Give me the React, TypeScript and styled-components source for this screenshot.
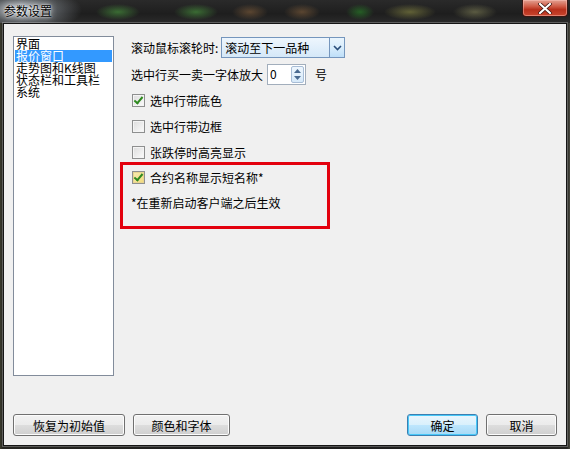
import React, { useState } from 'react';
import styled, { createGlobalStyle, css } from 'styled-components';

const GlobalStyle = createGlobalStyle`
  html, body {
    margin: 0;
    padding: 0;
    background: #1b1b1b;
    overflow: hidden;
  }
  *, *::before, *::after {
    box-sizing: border-box;
  }
`;

const FONT = `"Noto Sans CJK SC", "Liberation Sans", sans-serif`;

const categories = ['界面', '报价窗口', '走势图和K线图', '状态栏和工具栏', '系统'];

const checkOptions = [
  { key: 'rowBg', label: '选中行带底色' },
  { key: 'rowBorder', label: '选中行带边框' },
  { key: 'highlight', label: '张跌停时高亮显示' },
];

const App = () => {
  const [selected, setSelected] = useState(1);
  const [fontPlus, setFontPlus] = useState(0);
  const [options, setOptions] = useState<Record<string, boolean>>({
    rowBg: true,
    rowBorder: false,
    highlight: false,
    shortName: true,
  });

  const toggle = (key: string) => setOptions(prev => ({ ...prev, [key]: !prev[key] }));

  return (
    <Window>
      <GlobalStyle />
      <TitleBar>
        <Title>参数设置</Title>
        <CloseButton aria-label="关闭">
          <svg width="14" height="11" viewBox="0 0 14 11">
            <path d="M2 1 L12 10 M12 1 L2 10" stroke="#3a1410" strokeWidth="3.6" strokeLinecap="round" />
            <path d="M2 1 L12 10 M12 1 L2 10" stroke="#fff" strokeWidth="2.2" strokeLinecap="round" />
          </svg>
        </CloseButton>
      </TitleBar>

      <Client>
        <Body>
          <CategoryList>
            {categories.map((name, i) => (
              <CategoryItem key={name} $active={i === selected} onClick={() => setSelected(i)}>
                {name}
              </CategoryItem>
            ))}
          </CategoryList>

          <Panel>
            <FieldRow>
              <Label>滚动鼠标滚轮时:</Label>
              <Combo>
                <ComboText>滚动至下一品种</ComboText>
                <ComboArrow>
                  <svg width="9" height="6" viewBox="0 0 9 6">
                    <path d="M1 1 L4.5 4.5 L8 1" fill="none" stroke="#2b4e7a" strokeWidth="1.6" />
                  </svg>
                </ComboArrow>
              </Combo>
            </FieldRow>

            <FieldRow $gap={4} $top={6}>
              <Label>选中行买一卖一字体放大</Label>
              <Spin>
                <SpinValue>{fontPlus}</SpinValue>
                <SpinButtons>
                  <SpinBtn onClick={() => setFontPlus(v => v + 1)}>
                    <svg width="7" height="4" viewBox="0 0 7 4"><path d="M0 4 L3.5 0 L7 4 Z" fill="#4a6a90" /></svg>
                  </SpinBtn>
                  <SpinBtn onClick={() => setFontPlus(v => Math.max(0, v - 1))}>
                    <svg width="7" height="4" viewBox="0 0 7 4"><path d="M0 0 L3.5 4 L7 0 Z" fill="#4a6a90" /></svg>
                  </SpinBtn>
                </SpinButtons>
              </Spin>
              <Unit>号</Unit>
            </FieldRow>

            <Checks>
              {checkOptions.map(opt => (
                <CheckRow key={opt.key} onClick={() => toggle(opt.key)}>
                  <CheckBox $checked={options[opt.key]} />
                  <span>{opt.label}</span>
                </CheckRow>
              ))}

              <Marked>
                <CheckRow onClick={() => toggle('shortName')}>
                  <CheckBox $checked={options.shortName} $hover />
                  <span>合约名称显示短名称*</span>
                </CheckRow>
                <Note>*在重新启动客户端之后生效</Note>
              </Marked>
            </Checks>
          </Panel>
        </Body>

        <Footer>
          <ButtonGroup>
            <Button $w={112}>恢复为初始值</Button>
            <Button $w={97}>颜色和字体</Button>
          </ButtonGroup>
          <ButtonGroup>
            <Button $w={71} $primary>确定</Button>
            <Button $w={71}>取消</Button>
          </ButtonGroup>
        </Footer>
      </Client>
    </Window>
  );
};

const Window = styled.div`
  width: 570px;
  height: 449px;
  display: flex;
  flex-direction: column;
  font-family: ${FONT};
  font-size: 12px;
  color: #000;
  background:
    linear-gradient(90deg, #3a3a2c 0, #262622 3px, #1c1c1c 50%, #262624 calc(100% - 3px), #4a4a40 100%);
`;

const TitleBar = styled.div`
  height: 23px;
  flex: none;
  display: flex;
  justify-content: space-between;
  align-items: flex-start;
  background:
    radial-gradient(ellipse 60px 22px at 22px 10px, rgba(225, 232, 240, 0.9), rgba(180, 190, 200, 0.35) 55%, transparent 100%),
    radial-gradient(ellipse 22px 8px at 118px 12px, rgba(70, 140, 60, 0.7), transparent),
    radial-gradient(ellipse 22px 8px at 196px 12px, rgba(70, 140, 60, 0.7), transparent),
    radial-gradient(ellipse 18px 8px at 250px 12px, rgba(130, 95, 60, 0.6), transparent),
    radial-gradient(ellipse 18px 8px at 302px 12px, rgba(130, 95, 60, 0.6), transparent),
    radial-gradient(ellipse 14px 8px at 360px 12px, rgba(40, 120, 40, 0.7), transparent),
    radial-gradient(ellipse 26px 8px at 410px 12px, rgba(140, 140, 70, 0.6), transparent),
    radial-gradient(ellipse 22px 8px at 475px 12px, rgba(150, 150, 100, 0.5), transparent),
    linear-gradient(180deg, #2a2a2a 0, #1e1e1e 60%, #2b2b2b 100%);
`;

const Title = styled.div`
  padding: 3px 0 0 4px;
  font-size: 12px;
  line-height: 16px;
  color: #000;
  text-shadow: 0 0 6px rgba(255, 255, 255, 0.9), 0 0 2px #fff;
`;

const CloseButton = styled.button`
  width: 46px;
  height: 17px;
  margin-right: 2px;
  padding: 0;
  border: 1px solid #3b1612;
  border-top: none;
  border-radius: 0 0 4px 4px;
  display: flex;
  align-items: center;
  justify-content: center;
  background: linear-gradient(180deg, #e3a192 0, #cf5a45 40%, #b8301c 60%, #c9462e 100%);
  box-shadow: inset 0 0 0 1px rgba(255, 200, 190, 0.45);
`;

const Client = styled.div`
  flex: 1;
  margin: 0 3px 3px;
  padding: 12px 9px 9px;
  display: flex;
  flex-direction: column;
  background: #f0f0f0;
  border: 1px solid #151515;
  box-shadow: 0 0 0 1px rgba(255, 255, 255, 0.25);
`;

const Body = styled.div`
  display: flex;
  gap: 17px;
`;

const CategoryList = styled.div`
  width: 101px;
  height: 340px;
  flex: none;
  padding: 1px;
  background: #fff;
  border: 1px solid #828c9b;
`;

const CategoryItem = styled.div<{ $active?: boolean }>`
  height: 12px;
  line-height: 12px;
  padding-left: 1px;
  white-space: nowrap;
  cursor: default;
  ${p => p.$active && css`
    background: #3399ff;
    color: #fff;
  `}
`;

const Panel = styled.div`
  display: flex;
  flex-direction: column;
  padding-top: 1px;
`;

const FieldRow = styled.div<{ $gap?: number; $top?: number }>`
  display: flex;
  align-items: center;
  height: 21px;
  gap: ${p => p.$gap ?? 3}px;
  margin-top: ${p => p.$top ?? 0}px;
`;

const Label = styled.span`
  white-space: nowrap;
`;

const Combo = styled.div`
  width: 124px;
  height: 21px;
  display: flex;
  border: 1px solid #7596bd;
  background: linear-gradient(180deg, #eef6fd 0, #e1effb 50%, #d5e8f8 100%);
`;

const ComboText = styled.div`
  flex: 1;
  padding: 1px 0 0 2px;
  margin: 1px;
  line-height: 16px;
`;

const ComboArrow = styled.div`
  width: 15px;
  display: flex;
  align-items: center;
  justify-content: center;
  border-left: 1px solid #7596bd;
  background: linear-gradient(180deg, #eaf5fd 0, #d9edfc 50%, #bedff8 100%);
`;

const Spin = styled.div`
  width: 39px;
  height: 21px;
  display: flex;
  background: #fff;
  border: 1px solid #a2aebc;
`;

const SpinValue = styled.div`
  flex: 1;
  padding-left: 2px;
  line-height: 18px;
`;

const SpinButtons = styled.div`
  width: 13px;
  display: flex;
  flex-direction: column;
  margin: 1px 1px 1px 0;
  border: 1px solid #a8bdd6;
  border-radius: 2px;
  background: linear-gradient(180deg, #eef6fd 0, #d6e9f9 100%);
`;

const SpinBtn = styled.div`
  flex: 1;
  display: flex;
  align-items: center;
  justify-content: center;
`;

const Unit = styled.span`
  margin-left: 5px;
`;

const Checks = styled.div`
  display: flex;
  flex-direction: column;
  gap: 6px;
  margin-top: 5px;
`;

const CheckRow = styled.div`
  display: flex;
  align-items: center;
  gap: 5px;
  height: 20px;
  padding-left: 1px;
  cursor: default;
`;

const CheckBox = styled.span<{ $checked?: boolean; $hover?: boolean }>`
  position: relative;
  width: 13px;
  height: 13px;
  flex: none;
  border: 1px solid #8e8f8f;
  background: ${p => p.$hover
    ? 'linear-gradient(135deg, #f7ecb5 0, #f2d978 100%)'
    : 'linear-gradient(135deg, #dcdcdc 0, #fbfbfb 100%)'};
  box-shadow: inset 0 0 0 1px ${p => (p.$hover ? '#e8d590' : '#f4f4f4')};
  ${p => p.$checked && css`
    &::after {
      content: '';
      position: absolute;
      left: 3px;
      top: 0px;
      width: 5px;
      height: 9px;
      border: solid #2f8a1f;
      border-width: 0 2px 2px 0;
      transform: rotate(40deg);
    }
  `}
`;

const Marked = styled.div`
  position: relative;
  display: flex;
  flex-direction: column;
  gap: 6px;
  margin-top: -1px;

  &::before {
    content: '';
    position: absolute;
    left: -11px;
    top: -5px;
    width: 210px;
    height: 67px;
    border: 3px solid #e3000d;
    pointer-events: none;
  }
`;

const Note = styled.div`
  height: 20px;
  line-height: 20px;
`;

const Footer = styled.div`
  margin-top: auto;
  display: flex;
  justify-content: space-between;
`;

const ButtonGroup = styled.div`
  display: flex;
  gap: 8px;
`;

const Button = styled.button<{ $w: number; $primary?: boolean }>`
  width: ${p => p.$w}px;
  height: 22px;
  padding: 0;
  font-family: ${FONT};
  font-size: 12px;
  color: #000;
  border: 1px solid #707070;
  border-radius: 3px;
  background: linear-gradient(180deg, #f2f2f2 0, #ebebeb 50%, #dddddd 51%, #cfcfcf 100%);
  box-shadow: inset 0 0 0 1px #fcfcfc;
  ${p => p.$primary && css`
    border-color: #3c7fb1;
    background: linear-gradient(180deg, #eaf6fd 0, #d9f0fc 50%, #bee6fd 51%, #a7d9f5 100%);
    box-shadow: inset 0 0 0 1px #48c8f8;
  `}
`;

export default App;
